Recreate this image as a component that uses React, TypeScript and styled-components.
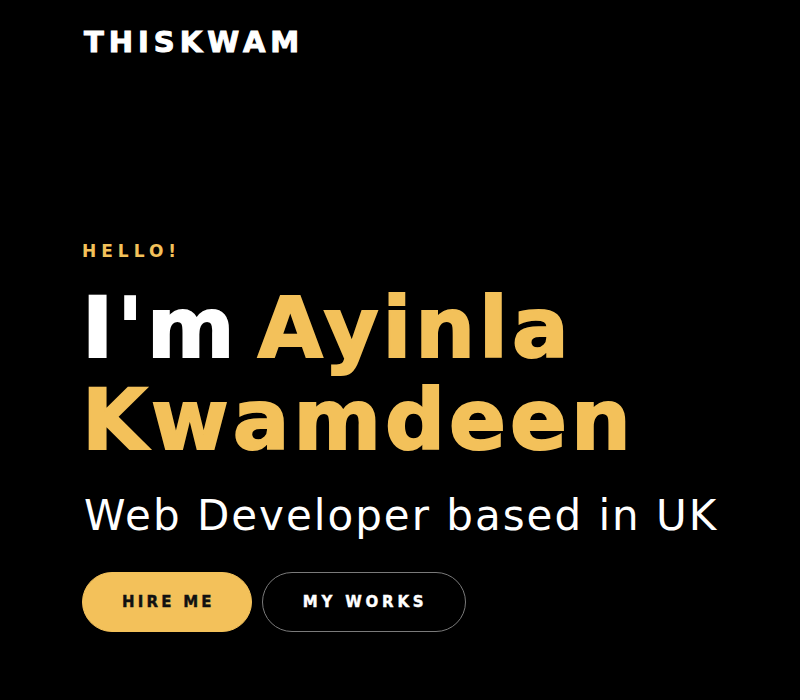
import React from 'react'
import styled, { createGlobalStyle } from 'styled-components'

const COLORS = {
    bg: '#000000',
    text: '#ffffff',
    accent: '#f3c15a',
    outline: '#7a7a7a',
}

const GlobalStyle = createGlobalStyle`
    html, body {
        margin: 0;
        padding: 0;
        background: ${COLORS.bg};
    }
    body {
        font-family: "DejaVu Sans", "Liberation Sans", sans-serif;
    }
`

const App: React.FC = () => {
    return (
        <Page>
            <GlobalStyle />
            <Header>
                <Logo>THISKWAM</Logo>
            </Header>
            <Hero>
                <Greeting>HELLO!</Greeting>
                <Title>
                    <TitleLine>I'm <Highlight>Ayinla</Highlight></TitleLine>
                    <TitleLine><Highlight>Kwamdeen</Highlight></TitleLine>
                </Title>
                <Subtitle>Web Developer based in UK</Subtitle>
                <Actions>
                    <Button variant="solid">HIRE ME</Button>
                    <Button variant="outline">MY WORKS</Button>
                </Actions>
            </Hero>
        </Page>
    )
}

export default App

const Page = styled.div`
    min-height: 700px;
    box-sizing: border-box;
    padding: 26px 40px 0 84px;
    background: ${COLORS.bg};
    color: ${COLORS.text};
`

const Header = styled.header`
    display: flex;
    align-items: center;
    height: 32px;
`

const Logo = styled.div`
    font-size: 29px;
    line-height: 32px;
    font-weight: 800;
    letter-spacing: 5px;
    -webkit-text-stroke: 1px currentColor;
`

const Hero = styled.section`
    display: flex;
    flex-direction: column;
    align-items: flex-start;
    margin-top: 181px;
`

const Greeting = styled.div`
    font-size: 17px;
    line-height: 24px;
    font-weight: 700;
    letter-spacing: 5px;
    color: ${COLORS.accent};
    margin-left: -2px;
`

const Title = styled.h1`
    display: flex;
    flex-direction: column;
    margin: 19px 0 0 -2px;
    font-size: 84px;
    line-height: 92px;
    font-weight: 800;
    letter-spacing: 4px;
    -webkit-text-stroke: 2px currentColor;
`

const TitleLine = styled.span`
    display: block;
    word-spacing: -14px;
`

const Highlight = styled.span`
    color: ${COLORS.accent};
`

const Subtitle = styled.p`
    margin: 24px 0 0 0;
    font-size: 42px;
    line-height: 52px;
    font-weight: 400;
    letter-spacing: 2px;
    white-space: nowrap;
`

interface ButtonProps {
    variant: 'solid' | 'outline',
}

const Actions = styled.div`
    display: flex;
    gap: 10px;
    margin-top: 30px;
    margin-left: -2px;
`

const Button = styled.button<ButtonProps>`
    height: 60px;
    padding: ${({ variant }) => variant === 'solid' ? '0 36px 0 39px' : '0 38px 0 40px'};
    border-radius: 30px;
    font-family: "DejaVu Sans", "Liberation Sans", sans-serif;
    font-size: 15px;
    font-weight: 700;
    letter-spacing: ${({ variant }) => variant === 'solid' ? '3.2px' : '3.8px'};
    cursor: pointer;
    -webkit-text-stroke: 0.4px currentColor;
    background: ${({ variant }) => variant === 'solid' ? COLORS.accent : 'transparent'};
    color: ${({ variant }) => variant === 'solid' ? '#111111' : COLORS.text};
    border: 1px solid ${({ variant }) => variant === 'solid' ? COLORS.accent : COLORS.outline};
`
